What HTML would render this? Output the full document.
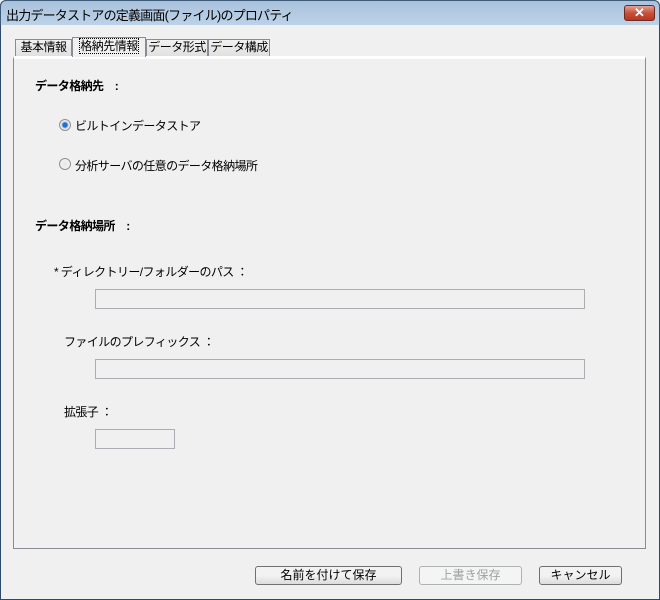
<!DOCTYPE html>
<html><head><meta charset="utf-8"><style>
*{margin:0;padding:0;box-sizing:border-box}
body{width:660px;height:600px;overflow:hidden;font-family:"Liberation Sans","Noto Sans CJK JP",sans-serif;font-size:12px;color:#000;background:#f0f0f0;position:relative}
.abs{position:absolute;white-space:nowrap}
.win{position:absolute;left:0;top:0;width:660px;height:600px;border:1px solid #2c4b6b;border-radius:6px 6px 0 0;background:#f0f0f0}
.title{position:absolute;left:0;top:0;width:660px;height:25px;background:linear-gradient(#a9c2dc,#bcd2e8);border-radius:6px 6px 0 0;border:1px solid #3d5a78;border-bottom:none}
.close{position:absolute;left:624px;top:5px;width:31px;height:16px;border:1px solid #6b2a22;border-radius:3px;background:linear-gradient(#e3a195,#c9503c 50%,#b8361f);color:#fff;font-weight:bold;font-size:13px;text-align:center;line-height:14px}
.tab{position:absolute;top:39px;height:17px;border:1px solid #898c95;border-bottom:none;background:linear-gradient(#f2f2f2,#e0e0e0);font-size:12px;line-height:15px;text-align:center;letter-spacing:-0.5px;overflow:hidden;white-space:nowrap}
.panel{position:absolute;left:13px;top:56px;width:633px;height:493px;border:1px solid #898c95;background:#f0f0f0;border-top:3px solid #fff}
.inp{position:absolute;border:1px solid #abadb3;background:#f0f0f0;height:20px}
.btn{position:absolute;top:566px;height:19px;border:1px solid #707070;border-radius:3px;background:linear-gradient(#f2f2f2 50%,#dcdcdc);text-align:center;font-size:12px;line-height:17px}
.radio{position:absolute;width:12px;height:12px;border-radius:50%;border:1px solid #8e8f8f;background:radial-gradient(#e6e6e6,#f8f8f8)}
.t{letter-spacing:-0.6px}
</style></head><body>
<div class="win"></div>
<div class="title"></div>
<div class="abs" style="left:6px;top:5px;font-size:13px;letter-spacing:-0.8px">出力データストアの定義画面(ファイル)のプロパティ</div>
<div class="close">✕</div>
<div class="panel"></div>
<div class="tab" style="left:15px;width:57px">基本情報</div>
<div class="tab" style="left:72px;top:37px;width:74px;height:20px;background:#f0f0f0;padding-top:1px"><span style="outline:1px dotted #000">格納先情報</span></div>
<div class="tab" style="left:146px;width:62px">データ形式</div>
<div class="tab" style="left:208px;width:62px">データ構成</div>
<div class="abs t" style="left:35px;top:77px;font-weight:bold">データ格納先　:</div>
<div class="radio" style="left:59px;top:119px;background:radial-gradient(#1d6fd0 30%,#bcd 45%,#eee 60%)"></div>
<div class="abs t" style="left:75px;top:117px">ビルトインデータストア</div>
<div class="radio" style="left:59px;top:158px"></div>
<div class="abs t" style="left:75px;top:157px">分析サーバの任意のデータ格納場所</div>
<div class="abs t" style="left:35px;top:217px;font-weight:bold">データ格納場所　:</div>
<div class="abs t" style="left:54px;top:263px">* ディレクトリー/フォルダーのパス ：</div>
<div class="inp" style="left:95px;top:289px;width:490px"></div>
<div class="abs t" style="left:64px;top:333px">ファイルのプレフィックス ：</div>
<div class="inp" style="left:95px;top:359px;width:490px"></div>
<div class="abs t" style="left:64px;top:403px">拡張子 ：</div>
<div class="inp" style="left:95px;top:429px;width:80px"></div>
<div class="btn" style="left:255px;width:147px">名前を付けて保存</div>
<div class="btn" style="left:419px;width:103px;border-color:#adb2b5;color:#a0a0a0;background:#f4f4f4">上書き保存</div>
<div class="btn" style="left:539px;width:83px">キャンセル</div>
</body></html>
